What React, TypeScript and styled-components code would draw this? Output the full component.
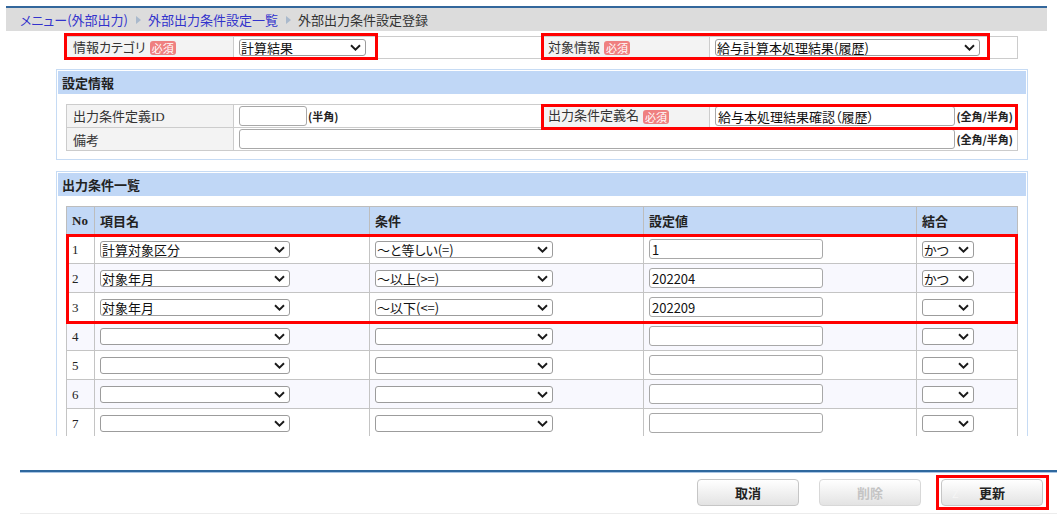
import React from "react";
import styled, { createGlobalStyle } from "styled-components";

const GlobalStyle = createGlobalStyle`
  html, body { margin: 0; padding: 0; background: #fff; }
  body {
    font-family: "Noto Sans CJK JP", "Noto Sans", sans-serif;
    font-size: 13px;
    color: #333;
    font-feature-settings: "palt";
  }
  * { box-sizing: border-box; }
`;

const Page = styled.div`
  position: relative;
  width: 1057px;
  height: 522px;
  overflow: hidden;
  padding-top: 6px;
`;

const Breadcrumb = styled.nav`
  margin: 0 10px 0 6px;
  height: 25px;
  border-top: 2px solid #33679c;
  background: #dcdcdc;
  display: flex;
  align-items: center;
  padding-left: 14px;
  font-size: 13px;
  line-height: 1;
`;

const Crumb = styled.span<{ $current?: boolean }>`
  color: ${(p) => (p.$current ? "#333" : "#3333cc")};
`;

const CrumbSep = styled.span`
  display: inline-block;
  width: 0;
  height: 0;
  margin: 0 7px 0 8px;
  border-top: 4px solid transparent;
  border-bottom: 4px solid transparent;
  border-left: 5px solid #a9b9cc;
`;

const Content = styled.div`
  margin-left: 56px;
  width: 972px;
  height: 405px;
  overflow: hidden;
  padding-top: 5px;
`;

const FormTable = styled.table<{ $ml: number; $mt?: number }>`
  border-collapse: collapse;
  table-layout: fixed;
  width: 951px;
  margin: ${(p) => p.$mt ?? 0}px 0 0 ${(p) => p.$ml}px;
`;

const FormRow = styled.tr<{ $h: number }>`
  height: ${(p) => p.$h}px;
`;

const LabelCell = styled.td`
  border: 1px solid #cccccc;
  background: #f3f3f3;
  padding: 0 6px;
  white-space: nowrap;
  font-size: 13px;
  color: #333;
  line-height: 1;
`;

const ValueCell = styled.td`
  border: 1px solid #cccccc;
  background: #fff;
  padding: 0 4px 0 5px;
`;

const Field = styled.div`
  display: flex;
  align-items: center;
`;

const Badge = styled.span`
  display: inline-block;
  margin-left: 4px;
  padding: 0 2px;
  height: 14px;
  line-height: 14px;
  border-radius: 3px;
  background: #ef8080;
  color: #fff;
  font-size: 11px;
  vertical-align: middle;
`;

const SerifText = styled.span`
  font-family: "Liberation Serif", "Times New Roman", serif;
`;

const SelectBox = styled.div<{ $w: number }>`
  width: ${(p) => p.$w}px;
  height: 17px;
  border: 1px solid #9c9c9c;
  border-radius: 3px;
  background: #fff;
  display: flex;
  align-items: center;
  justify-content: space-between;
  padding: 0 4px 0 1px;
  font-size: 13px;
  line-height: 1;
  color: #111;
  white-space: nowrap;
`;

const TextBox = styled.div<{ $w?: number }>`
  ${(p) => (p.$w ? `width: ${p.$w}px;` : "flex: 1;")}
  height: 20px;
  border: 1px solid #a8a8a8;
  border-radius: 3px;
  background: #fff;
  display: flex;
  align-items: center;
  padding: 0 2px;
  font-size: 13px;
  line-height: 1;
  color: #111;
`;

const Note = styled.span`
  font-size: 11px;
  font-weight: bold;
  color: #222;
  white-space: nowrap;
  margin-left: 1px;
`;

const Section = styled.section<{ $mt: number }>`
  margin-top: ${(p) => p.$mt}px;
  border: 1px solid #c6dbf4;
  padding: 1px 1px 8px;
`;

const SectionHeader = styled.h2`
  margin: 0;
  height: 23px;
  background: #c0d7f6;
  font-size: 13px;
  font-weight: bold;
  color: #222;
  padding-left: 4px;
  display: flex;
  align-items: center;
  line-height: 1;
`;

const ListTable = styled.table`
  border-collapse: collapse;
  table-layout: fixed;
  width: 951px;
  margin: 10px 0 0 8px;
`;

const HeadRow = styled.tr`
  height: 28px;
  background: #c2d8f6;
`;

const HeadCell = styled.th<{ $serif?: boolean }>`
  border: 1px solid #bdbdbd;
  text-align: left;
  padding: 0 5px;
  font-size: 13px;
  font-weight: bold;
  color: #222;
  line-height: 1;
  font-family: ${(p) =>
    p.$serif ? `"Liberation Serif", "Times New Roman", serif` : "inherit"};
`;

const BodyRow = styled.tr<{ $alt: boolean }>`
  height: 29px;
  background: ${(p) => (p.$alt ? "#f8f8fe" : "#ffffff")};
`;

const Cell = styled.td<{ $serif?: boolean }>`
  border: 1px solid #c4c4c4;
  padding: 0 5px;
  font-size: 13px;
  line-height: 1;
  color: #222;
  font-family: ${(p) =>
    p.$serif ? `"Liberation Serif", "Times New Roman", serif` : "inherit"};
`;

const Footer = styled.footer`
  margin: 34px 0 0 20px;
  height: 44px;
  border-top: 2px solid #2f689e;
  border-bottom: 1px solid #ececec;
  box-shadow: inset 0 1px 0 #a9c5e4;
  display: flex;
  justify-content: flex-end;
  align-items: flex-start;
  gap: 20px;
  padding: 7px 14px 0 0;
`;

const Button = styled.button<{ $disabled?: boolean }>`
  position: relative;
  width: 102px;
  height: 27px;
  border: 1px solid ${(p) => (p.$disabled ? "#d8d8d8" : "#c6c6c6")};
  border-radius: 4px;
  background: linear-gradient(#ffffff, #e3e3e3);
  font-family: inherit;
  font-size: 13px;
  font-weight: bold;
  color: ${(p) => (p.$disabled ? "#c4c4c4" : "#222")};
  padding: 0;
  line-height: 1;
`;

const Hotkey = styled.span`
  position: absolute;
  left: 10px;
  top: 50%;
  transform: translateY(-50%);
  color: #f6f6f6;
  font-size: 11px;
  font-weight: normal;
`;

const Highlight = styled.div<{ $x: number; $y: number; $w: number; $h: number }>`
  position: absolute;
  left: ${(p) => p.$x}px;
  top: ${(p) => p.$y}px;
  width: ${(p) => p.$w}px;
  height: ${(p) => p.$h}px;
  border: 3px solid #ff0000;
  pointer-events: none;
  z-index: 5;
`;

const Chevron = () => (
  <svg width="11" height="7" viewBox="0 0 11 7" style={{ flex: "none" }}>
    <path d="M1 1.2 L5.5 5.6 L10 1.2" fill="none" stroke="#1a1a1a" strokeWidth="1.9" />
  </svg>
);

const Select: React.FC<{ w: number; value?: string }> = ({ w, value }) => (
  <SelectBox $w={w}>
    <span>{value ?? ""}</span>
    <Chevron />
  </SelectBox>
);

const rows = [
  { item: "計算対象区分", cond: "～と等しい(=)", val: "1", join: "かつ" },
  { item: "対象年月", cond: "～以上(>=)", val: "202204", join: "かつ" },
  { item: "対象年月", cond: "～以下(<=)", val: "202209", join: "" },
  { item: "", cond: "", val: "", join: "" },
  { item: "", cond: "", val: "", join: "" },
  { item: "", cond: "", val: "", join: "" },
  { item: "", cond: "", val: "", join: "" },
];

const highlights = [
  { x: 64, y: 33, w: 314, h: 27 },
  { x: 541, y: 33, w: 449, h: 27 },
  { x: 541, y: 104, w: 477, h: 26 },
  { x: 66, y: 234, w: 952, h: 90 },
  { x: 936, y: 475, w: 113, h: 35 },
];

export default function App() {
  return (
    <>
      <GlobalStyle />
      <Page>
        <Breadcrumb>
          <Crumb>メニュー(外部出力)</Crumb>
          <CrumbSep />
          <Crumb>外部出力条件設定一覧</Crumb>
          <CrumbSep />
          <Crumb $current>外部出力条件設定登録</Crumb>
        </Breadcrumb>

        <Content>
          <FormTable $ml={10}>
            <colgroup>
              <col style={{ width: 167 }} />
              <col style={{ width: 308 }} />
              <col style={{ width: 168 }} />
              <col style={{ width: 308 }} />
            </colgroup>
            <tbody>
              <FormRow $h={22}>
                <LabelCell>
                  情報カテゴリ<Badge>必須</Badge>
                </LabelCell>
                <ValueCell>
                  <Select w={127} value="計算結果" />
                </ValueCell>
                <LabelCell>
                  対象情報<Badge>必須</Badge>
                </LabelCell>
                <ValueCell>
                  <Select w={265} value="給与計算本処理結果(履歴)" />
                </ValueCell>
              </FormRow>
            </tbody>
          </FormTable>

          <Section $mt={10}>
            <SectionHeader>設定情報</SectionHeader>
            <FormTable $ml={8} $mt={10}>
              <colgroup>
                <col style={{ width: 167 }} />
                <col style={{ width: 308 }} />
                <col style={{ width: 168 }} />
                <col style={{ width: 308 }} />
              </colgroup>
              <tbody>
                <FormRow $h={23}>
                  <LabelCell>
                    出力条件定義<SerifText>ID</SerifText>
                  </LabelCell>
                  <ValueCell>
                    <Field>
                      <TextBox $w={68} />
                      <Note>(半角)</Note>
                    </Field>
                  </ValueCell>
                  <LabelCell>
                    出力条件定義名<Badge>必須</Badge>
                  </LabelCell>
                  <ValueCell>
                    <Field>
                      <TextBox>給与本処理結果確認（履歴）</TextBox>
                      <Note>(全角/半角)</Note>
                    </Field>
                  </ValueCell>
                </FormRow>
                <FormRow $h={23}>
                  <LabelCell>備考</LabelCell>
                  <ValueCell colSpan={3}>
                    <Field>
                      <TextBox />
                      <Note>(全角/半角)</Note>
                    </Field>
                  </ValueCell>
                </FormRow>
              </tbody>
            </FormTable>
          </Section>

          <Section $mt={11}>
            <SectionHeader>出力条件一覧</SectionHeader>
            <ListTable>
              <colgroup>
                <col style={{ width: 28 }} />
                <col style={{ width: 275 }} />
                <col style={{ width: 274 }} />
                <col style={{ width: 273 }} />
                <col style={{ width: 101 }} />
              </colgroup>
              <thead>
                <HeadRow>
                  <HeadCell $serif>No</HeadCell>
                  <HeadCell>項目名</HeadCell>
                  <HeadCell>条件</HeadCell>
                  <HeadCell>設定値</HeadCell>
                  <HeadCell>結合</HeadCell>
                </HeadRow>
              </thead>
              <tbody>
                {rows.map((r, i) => (
                  <BodyRow key={i} $alt={i % 2 === 1}>
                    <Cell $serif>{i + 1}</Cell>
                    <Cell>
                      <Select w={190} value={r.item} />
                    </Cell>
                    <Cell>
                      <Select w={178} value={r.cond} />
                    </Cell>
                    <Cell>
                      <TextBox $w={174}>{r.val}</TextBox>
                    </Cell>
                    <Cell>
                      <Select w={52} value={r.join} />
                    </Cell>
                  </BodyRow>
                ))}
              </tbody>
            </ListTable>
          </Section>
        </Content>

        <Footer>
          <Button>取消</Button>
          <Button $disabled>削除</Button>
          <Button>
            <Hotkey>Z</Hotkey>更新
          </Button>
        </Footer>

        {highlights.map((h, i) => (
          <Highlight key={i} $x={h.x} $y={h.y} $w={h.w} $h={h.h} />
        ))}
      </Page>
    </>
  );
}
